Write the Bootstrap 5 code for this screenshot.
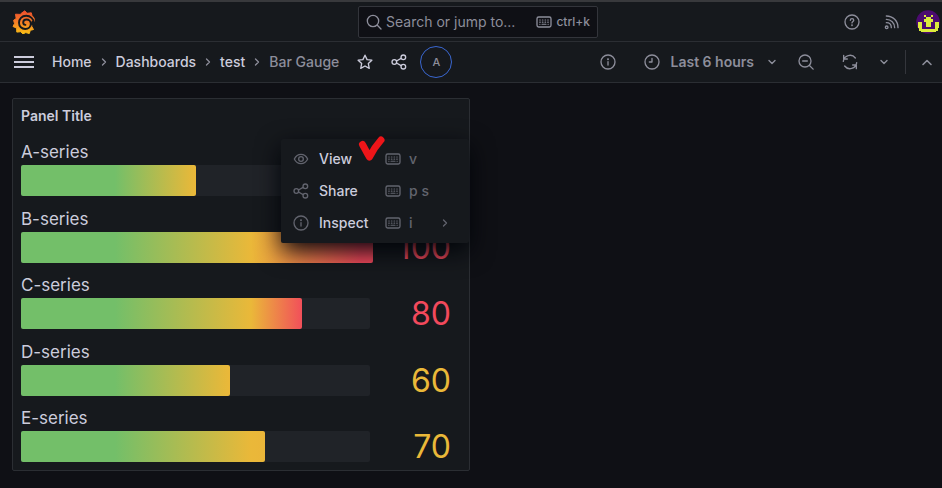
<!DOCTYPE html>
<html lang="en" data-bs-theme="dark">
<head>
<meta charset="utf-8">
<meta name="viewport" content="width=device-width, initial-scale=1">
<title>Bar Gauge - Dashboards - Grafana</title>
<link href="https://cdn.jsdelivr.net/npm/bootstrap@5.3.0/dist/css/bootstrap.min.css" rel="stylesheet">
<style>
:root { --canvas: #0f1015; --surface: #16191d; --line: #2b2e33; --text: #ccccdc; --muted: #8d8e9b; --dim: #62646e; }
body { background: var(--canvas); color: var(--text); font-family: Inter, "Liberation Sans", sans-serif; font-size: 14px; line-height: 20px; }
svg.ico { width: 16px; height: 16px; fill: none; stroke: currentColor; stroke-width: 2; stroke-linecap: round; stroke-linejoin: round; flex: none; display: block; }
svg.ico-s { width: 12px; height: 12px; }
.bare { background: none; border: 0; padding: 0; color: inherit; display: flex; align-items: center; justify-content: center; }
.topbar { height: 42px; border-top: 2px solid #38393c; border-bottom: 1px solid var(--line); background: var(--surface); padding: 0 2px 0 12px; }
.side { flex: 1 1 0; }
.search-box { width: 240px; height: 32px; margin-left: 4px; border: 1px solid #33353b; border-radius: 2px; background: var(--canvas); padding: 0 7px; color: var(--muted); }
.search-box input { background: none; border: 0; outline: 0; padding: 0; min-width: 0; color: inherit; font-size: 14px; }
.search-box input::placeholder { color: var(--muted); opacity: 1; }
.keys { font-size: 12px; font-weight: 500; }
.toolbar { height: 41px; border-bottom: 1px solid var(--line); background: var(--surface); padding: 0 9px 0 14px; }
.crumbs { font-weight: 500; padding-left: 18px; --bs-breadcrumb-margin-bottom: 0; }
.crumbs a { color: var(--text); text-decoration: none; }
.crumbs li { display: flex; align-items: center; }
.crumbs li svg { margin: 0 6px; color: var(--muted); }
.crumbs .here { color: var(--muted); }
.crumb-action { margin-left: 18px; }
.user-ring { width: 32px; height: 32px; margin-left: 13px; border: 1px solid #3a67d0; border-radius: 50%; font-size: 11px; font-weight: 500; color: var(--muted); }
.tools { color: var(--muted); font-weight: 500; }
.time-range { gap: 10px; font-weight: 600; }
.time-range .ico-s { margin-left: 2px; }
.divider { width: 1px; height: 24px; margin: 0 15px; background: #34363c; }
.workspace { padding: 15px 14px 17px 12px; }
.panel { background: var(--surface); border: 1px solid var(--line); border-radius: 2px; padding: 0 8px 8px; min-height: 373px; }
.panel-heading { font-size: 14px; font-weight: 600; line-height: 34px; margin: 0 0 8px; color: var(--text); }
.gauge-name { font-size: 17px; line-height: 22px; margin-bottom: 2px; }
.track { height: 31px; background: #202328; border-radius: 2px; }
.fill { height: 31px; border-radius: 2px; background: linear-gradient(90deg, #73bf69 0, #73bf69 94px, #eab839 var(--mid), #f2495c var(--end)); }
.to-yellow-s { --mid: 174px; --end: 700px; }
.to-yellow-m { --mid: 208px; --end: 900px; }
.to-yellow { --mid: 230px; --end: 900px; }
.to-red { --mid: 230px; --end: 284px; }
.to-red-l { --mid: 230px; --end: 340px; }
.reading { width: 91px; padding-right: 10px; font-size: 32px; line-height: 31px; text-align: right; }
.high { color: #f2495c; } .medium { color: #eab839; }
.panel-menu { position: absolute; top: 40px; right: 0; width: 188px; padding: 4px 0; background: var(--surface); border-radius: 2px; box-shadow: 0 8px 24px #010409; }
.panel-menu button { width: 100%; height: 32px; justify-content: flex-start; padding: 0 12px; color: var(--dim); }
.menu-name { width: 68px; padding-left: 10px; text-align: left; font-weight: 500; color: var(--text); }
.menu-key { padding-left: 8px; font-weight: 500; }
.menu-more { margin: 0 6px 0 auto; }
.tick { position: absolute; top: -6px; left: 76px; width: 30px; height: 30px; }
</style>
<script src="https://cdn.jsdelivr.net/npm/bootstrap@5.3.0/dist/js/bootstrap.bundle.min.js"></script>
</head>
<body class="d-flex flex-column min-vh-100">
<svg width="0" height="0" class="position-absolute" aria-hidden="true">
  <symbol id="right" viewBox="0 0 12 12"><path d="M4.500 3 7.500 6 4.500 9" stroke-width="1.300"/></symbol>
  <symbol id="down" viewBox="0 0 12 12"><path d="M3 4.500 6 7.500 9 4.500" stroke-width="1.400"/></symbol>
  <symbol id="share" viewBox="0 0 24 24"><circle cx="5" cy="12" r="3.500"/><circle cx="18.500" cy="5" r="3.500"/><circle cx="18.500" cy="19" r="3.500"/><path d="m8.200 10.500 7-4M8.200 13.500l7 4"/></symbol>
  <symbol id="info" viewBox="0 0 24 24"><circle cx="12" cy="12" r="10.500"/><path d="M12 11.500v5"/><circle cx="12" cy="7.800" r=".6"/></symbol>
  <symbol id="keyboard" viewBox="0 0 24 24"><rect x="1.500" y="4.500" width="21" height="15" rx="2.500"/><path d="M5.500 9h1M9.500 9h1M13.500 9h1M17.500 9h1M5.500 12.200h1M9.500 12.200h1M13.500 12.200h1M17.500 12.200h1M5.500 15.500h.5M9 15.500h6M18 15.500h.5" stroke-width="1.600"/></symbol>
</svg>

<header>
  <div class="topbar d-flex align-items-center">
    <div class="side">
      <a href="#" class="d-inline-block align-middle" aria-label="Grafana home">
        <svg width="24" height="24" viewBox="0 0 24 24" class="d-block">
          <defs><linearGradient id="flame" x1="0" y1="0" x2="0" y2="1"><stop offset=".05" stop-color="#f0532d"/><stop offset=".5" stop-color="#f47f26"/><stop offset="1" stop-color="#fbc015"/></linearGradient></defs>
          <path fill="url(#flame)" stroke="url(#flame)" stroke-linejoin="round" d="M12.800.8 15 3.300 19.300 2.800 20 5.600 22 8l.5 3.500-2.500 2-.2 3 1.700 3-3.200.8-1 3.200-3.500-.9-3 1.300-2-2.200-4 .4-.2-4-3.600-1.600 1.500-3L1.600 10.300 4.200 8.500 3.500 4.200l4.700.2L9.700 3Z"/>
          <path fill="none" stroke="#16191d" stroke-width="1.900" stroke-linecap="round" d="M22 12.800c-.4-3.900-3.500-7-7.800-7-4.500 0-7.200 3.200-7.200 6.900 0 3.700 2.800 6.300 6.200 6.300 3.200 0 5.600-2.200 5.600-5.200 0-2.600-2-4.300-4.300-4.300-2 0-3.300 1.400-3.300 3 0 1.400 1 2.300 2.200 2.400"/>
          <path fill="#16191d" d="M20 10.500c1.600 1 2.400 1.800 4 1.500v3.500h-4.500l-.8-2Z"/>
        </svg>
      </a>
    </div>
    <label class="search-box d-flex align-items-center">
      <svg class="ico" viewBox="0 0 24 24"><circle cx="10.500" cy="10.500" r="8.500"/><path d="m17 17 5.500 5.500"/></svg>
      <input class="flex-grow-1 ms-1" type="text" placeholder="Search or jump to..." aria-label="Search or jump to">
      <svg class="ico"><use href="#keyboard"/></svg><span class="keys ms-1">ctrl+k</span>
    </label>
    <div class="side d-flex align-items-center justify-content-end tools">
      <button class="bare" aria-label="Help"><svg class="ico" viewBox="0 0 24 24"><circle cx="12" cy="12" r="10.500"/><path d="M9.500 9.500c0-1.700 1.200-2.500 2.500-2.500s2.600.9 2.600 2.400c0 1.900-2.600 1.800-2.600 4"/><circle cx="12" cy="16.800" r=".5"/></svg></button>
      <button class="bare ms-4" aria-label="News"><svg class="ico" viewBox="0 0 24 24"><circle cx="4" cy="20" r="2"/><path d="M3.500 13c4.400 0 7.500 3 7.500 7.500M3.500 8C10.500 8 16 13.500 16 20.500M3.500 3C13.500 3 21 10.500 21 20.500"/></svg></button>
      <button class="bare ms-3" aria-label="Profile"><svg width="24" height="24" viewBox="0 0 24 24"><circle cx="12" cy="12" r="11.800" fill="#4b0b70"/><path fill="#dcec3c" shape-rendering="crispEdges" d="M8 5h2v2H8ZM15 5h2v2h-2ZM10 7h5v2h2v3h-2v5h-5v-5H8V9h2ZM2 12h4v7h13v-7h4v6h-1v3h-2v1H5v-1H3v-3H2Z"/></svg></button>
    </div>
  </div>

  <nav class="toolbar d-flex align-items-center" aria-label="Dashboard">
    <button class="bare" aria-label="Open menu"><svg width="20" height="14" viewBox="0 0 20 14"><path d="M0 2h20M0 7h20M0 12h20" stroke="#ccccdc" stroke-width="2"/></svg></button>
    <ol class="breadcrumb crumbs flex-nowrap text-nowrap">
      <li><a href="#">Home</a><svg class="ico ico-s"><use href="#right"/></svg></li>
      <li><a href="#">Dashboards</a><svg class="ico ico-s"><use href="#right"/></svg></li>
      <li><a href="#">test</a><svg class="ico ico-s"><use href="#right"/></svg></li>
      <li class="here" aria-current="page">Bar Gauge</li>
    </ol>
    <button class="bare crumb-action" aria-label="Mark as favorite"><svg class="ico" viewBox="0 0 24 24"><path d="m12 1.800 3.100 6.600 7.200.9-5.300 5 1.400 7.200-6.400-3.500-6.400 3.500L7 14.300l-5.300-5 7.200-.9Z"/></svg></button>
    <button class="bare crumb-action" aria-label="Share dashboard"><svg class="ico"><use href="#share"/></svg></button>
    <button class="bare user-ring" aria-label="User A">A</button>
    <div class="tools d-flex align-items-center ms-auto text-nowrap">
      <button class="bare" aria-label="Insights"><svg class="ico"><use href="#info"/></svg></button>
      <button class="bare time-range ms-4 ps-1" aria-label="Time range: last 6 hours"><svg class="ico" viewBox="0 0 24 24"><circle cx="12" cy="12" r="10.500"/><path d="M12 6.500V12H8"/></svg><span>Last 6 hours</span><svg class="ico ico-s"><use href="#down"/></svg></button>
      <button class="bare ms-3 ps-1" aria-label="Zoom out"><svg class="ico" viewBox="0 0 24 24"><circle cx="10.500" cy="10.500" r="9"/><path d="m17.200 17.200 5.500 5.500M7 10.500h7"/></svg></button>
      <button class="bare ms-4 ps-1" aria-label="Refresh"><svg class="ico" viewBox="0 0 24 24"><path d="M2 11A10 10 0 0 1 20 6M2.500 2v5.500H8M22 13A10 10 0 0 1 4 18M21.500 22v-5.500H16"/></svg></button>
      <button class="bare ms-3 ps-1" aria-label="Refresh interval"><svg class="ico ico-s"><use href="#down"/></svg></button>
      <span class="divider"></span>
      <button class="bare" aria-label="Hide top bar"><svg class="ico ico-s" viewBox="0 0 12 12"><path d="m2 8.500 4-4 4 4" stroke-width="1.600"/></svg></button>
    </div>
  </nav>
</header>

<main class="workspace flex-grow-1 d-flex">
  <div class="row g-0 flex-grow-1">
    <div class="col-6 d-flex">
      <section class="panel flex-grow-1 d-flex flex-column position-relative">
        <h2 class="panel-heading">Panel Title</h2>
        <div class="flex-grow-1 d-flex flex-column justify-content-between">
          <div><div class="gauge-name">A-series</div><div class="d-flex"><div class="track flex-grow-1"><div class="fill to-yellow-s" style="width:50%"></div></div><div class="reading medium"></div></div></div>
          <div><div class="gauge-name">B-series</div><div class="d-flex"><div class="track flex-grow-1"><div class="fill to-red-l" style="width:101%"></div></div><div class="reading high">100</div></div></div>
          <div><div class="gauge-name">C-series</div><div class="d-flex"><div class="track flex-grow-1"><div class="fill to-red" style="width:80.500%"></div></div><div class="reading high">80</div></div></div>
          <div><div class="gauge-name">D-series</div><div class="d-flex"><div class="track flex-grow-1"><div class="fill to-yellow-m" style="width:60%"></div></div><div class="reading medium">60</div></div></div>
          <div><div class="gauge-name">E-series</div><div class="d-flex"><div class="track flex-grow-1"><div class="fill to-yellow" style="width:70%"></div></div><div class="reading medium">70</div></div></div>
        </div>
        <div class="panel-menu" role="menu">
          <button class="bare" role="menuitem"><svg class="ico" viewBox="0 0 24 24"><path d="M2 12c2.200-4.500 5.800-7 10-7s7.800 2.500 10 7c-2.200 4.500-5.800 7-10 7s-7.800-2.500-10-7Z"/><circle cx="12" cy="12" r="3.500"/></svg><span class="menu-name">View</span><svg class="ico ms-2"><use href="#keyboard"/></svg><span class="menu-key">v</span></button>
          <button class="bare" role="menuitem"><svg class="ico"><use href="#share"/></svg><span class="menu-name">Share</span><svg class="ico ms-2"><use href="#keyboard"/></svg><span class="menu-key">p s</span></button>
          <button class="bare" role="menuitem"><svg class="ico"><use href="#info"/></svg><span class="menu-name">Inspect</span><svg class="ico ms-2"><use href="#keyboard"/></svg><span class="menu-key">i</span><svg class="ico ico-s menu-more"><use href="#right"/></svg></button>
          <svg class="tick" viewBox="0 0 30 30" fill="none" stroke="#ee1519" stroke-width="7" stroke-linecap="round" stroke-linejoin="round" aria-hidden="true"><path d="M5.500 11.500c2 3.500 3.500 7 7 12.500 3-6 7-12 11.500-17"/></svg>
        </div>
      </section>
    </div>
  </div>
</main>
</body>
</html>
